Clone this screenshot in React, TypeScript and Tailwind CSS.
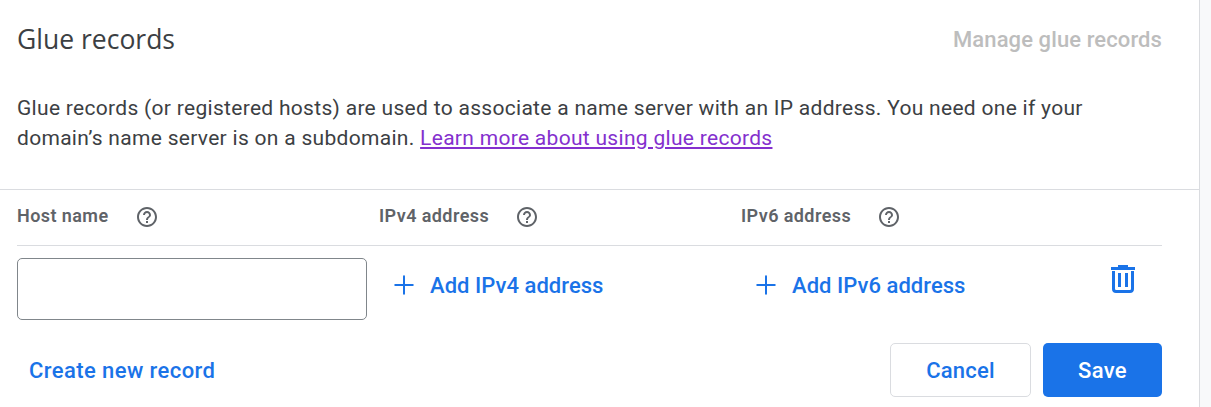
import React from "react";
import { Plus } from "lucide-react";

const font = { fontFamily: "Roboto, sans-serif" };

function Help() {
  return (
    <svg width="24" height="24" viewBox="0 0 24 24" className="fill-[#5f6368] shrink-0 mt-[2px]">
      <path d="M11 18h2v-2h-2v2zm1-16C6.48 2 2 6.48 2 12s4.48 10 10 10 10-4.48 10-10S17.52 2 12 2zm0 18c-4.41 0-8-3.59-8-8s3.59-8 8-8 8 3.59 8 8-3.59 8-8 8zm0-14c-2.21 0-4 1.79-4 4h2c0-1.1.9-2 2-2s2 .9 2 2c0 2-3 1.75-3 5h2c0-2.25 3-2.5 3-5 0-2.21-1.79-4-4-4z" />
    </svg>
  );
}

function Head({ label }: { label: string }) {
  return (
    <div className="flex items-center gap-[26px] pb-[4px]">
      <span className="text-[18px] font-semibold tracking-[0.42px] text-[#5f6368]">{label}</span>
      <Help />
    </div>
  );
}

function AddAddress({ label }: { label: string }) {
  return (
    <div className="flex items-center gap-[11px] pl-[10px] h-[54px] text-[#1a73e8]">
      <Plus size={30} strokeWidth={1.6} className="-mt-[1px]" />
      <span className="text-[22px] font-[470] tracking-[0.04px]">{label}</span>
    </div>
  );
}

export default function App() {
  return (
    <div className="flex w-[1211px] h-[407px] overflow-hidden bg-white" style={font}>
      <main className="w-[1200px] shrink-0 border-r border-[#dadce0]">
        <div className="pl-[17px] pr-[37px]">
          <div className="flex items-center justify-between h-[78px]">
            <h1 className="text-[26.500px] text-[#3c4043] font-normal mt-[2px]" style={{ fontFamily: "'Open Sans', sans-serif" }}>
              Glue records
            </h1>
            <span className="text-[22px] font-[470] tracking-[0.1px] text-[#bdbdbd]">Manage glue records</span>
          </div>
          <p className="text-[21px] leading-[30px] tracking-[0.3px] text-[#3c4043] h-[111px] pt-[15px]">
            Glue records (or registered hosts) are used to associate a name server with an IP address. You need one if your
            <br />
            domain’s name server is on a subdomain.{" "}
            <a className="text-[#8430ce] underline" href="#">
              Learn more about using glue records
            </a>
          </p>
        </div>
        <div className="border-t border-[#dadce0] pl-[17px] pr-[37px]">
          <div className="grid grid-cols-[362px_362px_1fr] h-[56px] items-center border-b border-[#dadce0]">
            <Head label="Host name" />
            <Head label="IPv4 address" />
            <Head label="IPv6 address" />
          </div>
          <div className="grid grid-cols-[362px_362px_1fr] pt-[12px]">
            <input
              aria-label="Host name"
              className="w-[350px] h-[62px] rounded-[5px] border border-[#80868b] bg-white"
            />
            <AddAddress label="Add IPv4 address" />
            <div className="flex justify-between pr-[27px]">
              <AddAddress label="Add IPv6 address" />
              <svg width="24" height="28" viewBox="0 0 24 28" className="mt-[7px] fill-[#1a73e8]">
                <path d="M7 0h10v2h7v3H0V2h7z" />
                <path d="M1 6h3v17.500c0 1 .5 1.500 1.500 1.500h13c1 0 1.500-.5 1.500-1.500V6h3v18c0 2.500-1.500 4-4 4H5c-2.500 0-4-1.500-4-4V6z" />
                <path d="M7 8h3v14H7zM14 8h3v14h-3z" />
              </svg>
            </div>
          </div>
          <div className="flex items-center justify-between mt-[23px]">
            <a className="pl-[12px] text-[22px] font-[470] tracking-[0.42px] text-[#1a73e8]" href="#">
              Create new record
            </a>
            <div className="flex gap-[12px]">
              <button className="w-[141px] h-[54px] rounded-[5px] border border-[#dadce0] bg-white text-[22px] font-[470] tracking-[0.2px] text-[#1a73e8]">
                Cancel
              </button>
              <button className="w-[119px] h-[54px] rounded-[5px] bg-[#1a73e8] text-[22px] font-medium tracking-[0.3px] text-white">
                Save
              </button>
            </div>
          </div>
        </div>
      </main>
      <aside className="flex-1 bg-[#f8f9fa]" />
    </div>
  );
}
